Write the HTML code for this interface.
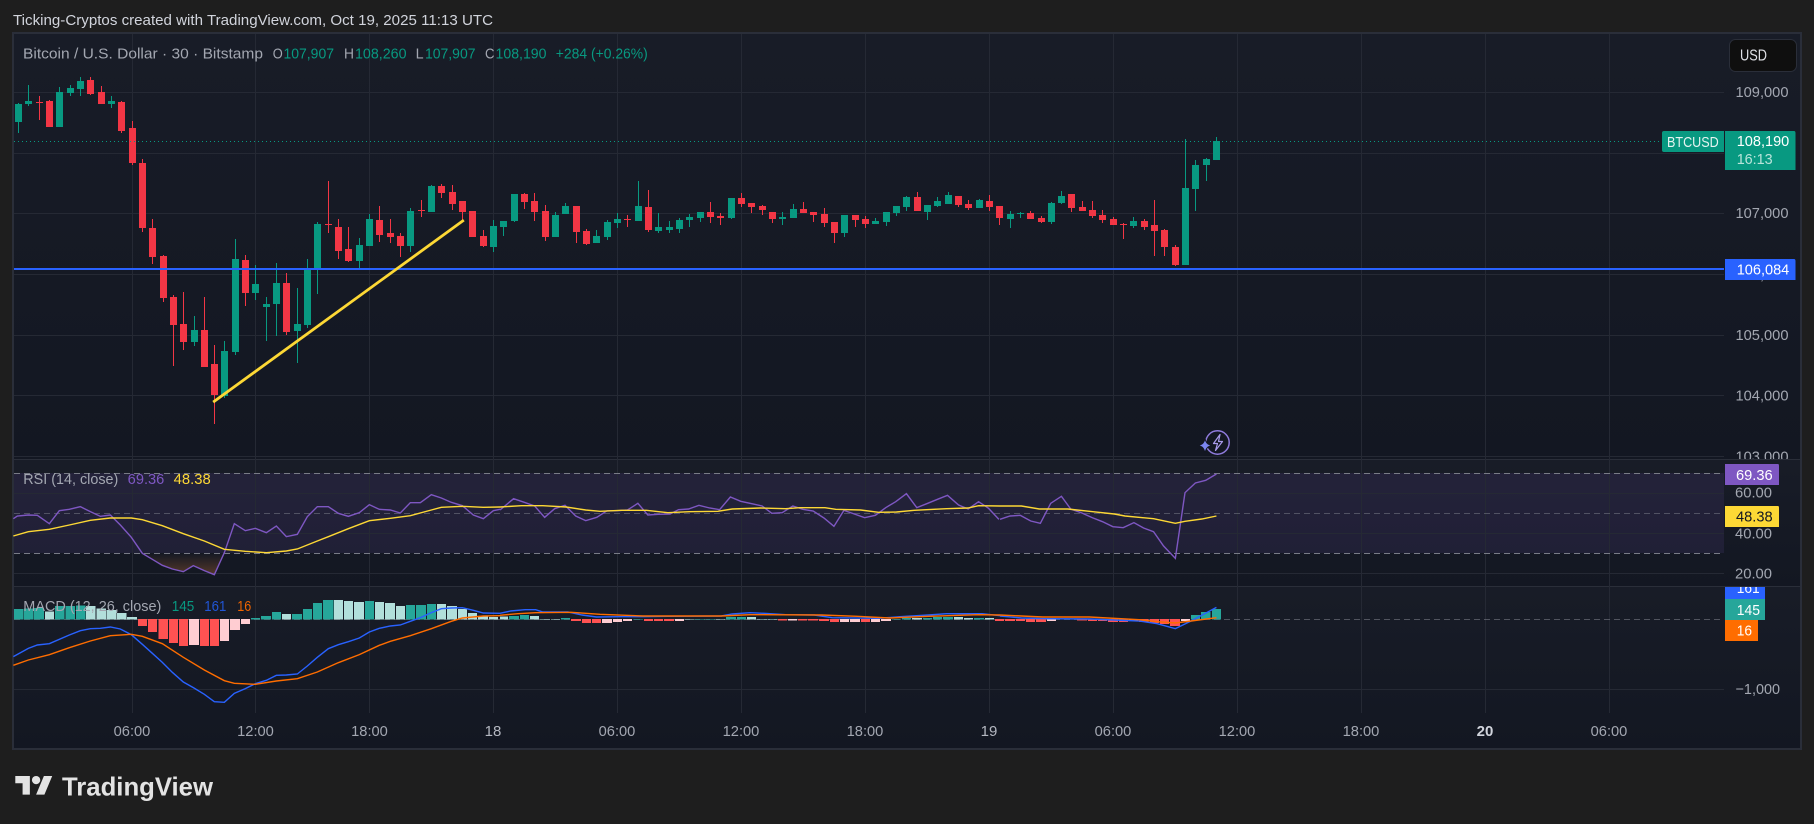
<!DOCTYPE html>
<html><head><meta charset="utf-8"><title>BTCUSD</title>
<style>
html,body{margin:0;padding:0;background:#1e1e1e;width:1814px;height:824px;overflow:hidden}
svg{display:block}
text{font-family:"Liberation Sans",sans-serif;font-size:14px}
.ax{fill:#a3a7b1;font-size:15px}
.t{fill:#a3a7b1;font-size:15px;text-anchor:middle}
.lg{fill:#a3a7b1;font-size:14.5px}
.v{fill:#089981;font-size:14.5px}
</style></head><body>
<svg width="1814" height="824" viewBox="0 0 1814 824" xmlns="http://www.w3.org/2000/svg">
<defs>
<linearGradient id="g1" x1="0" y1="0" x2="0" y2="1"><stop offset="0" stop-color="#181c27"/><stop offset="1" stop-color="#131722"/></linearGradient>
<linearGradient id="ov" gradientUnits="userSpaceOnUse" x1="0" y1="280" x2="0" y2="344"><stop offset="0" stop-color="#ff8c3c" stop-opacity="0"/><stop offset="1" stop-color="#ff8c3c" stop-opacity=".28"/></linearGradient>
<clipPath id="c161"><rect x="1725" y="587" width="45" height="13"/></clipPath>
</defs>
<rect width="1814" height="824" fill="#1e1e1e"/>
<text x="13" y="25" fill="#d1d4dc" style="font-size:14.5px" textLength="480" lengthAdjust="spacingAndGlyphs">Ticking-Cryptos created with TradingView.com, Oct 19, 2025 11:13 UTC</text>

<rect x="13" y="33" width="1788" height="716" fill="#131722" stroke="#2a2e39" stroke-width="2"/>
<rect x="14" y="34" width="1786" height="425" fill="url(#g1)"/>

<!-- price pane grid -->
<g shape-rendering="crispEdges" stroke="#252934" stroke-width="1" fill="none">
<path d="M14 92.5H1724M14 153.5H1724M14 213.5H1724M14 274.5H1724M14 335.5H1724M14 395.5H1724M14 456.5H1724"/>
</g>
<text class="ax" x="1735.5" y="97" textLength="53" lengthAdjust="spacingAndGlyphs">109,000</text>
<text class="ax" x="1735.5" y="218" textLength="53" lengthAdjust="spacingAndGlyphs">107,000</text>
<text class="ax" x="1735.5" y="279.6" textLength="53" lengthAdjust="spacingAndGlyphs">106,000</text>
<text class="ax" x="1735.5" y="340" textLength="53" lengthAdjust="spacingAndGlyphs">105,000</text>
<text class="ax" x="1735.5" y="400.5" textLength="53" lengthAdjust="spacingAndGlyphs">104,000</text>
<text class="ax" x="1735.5" y="461.7" textLength="53" lengthAdjust="spacingAndGlyphs">103,000</text>

<!-- lower panes -->
<rect x="14" y="460" width="1786" height="126" fill="url(#g1)"/>
<rect x="14" y="587" width="1786" height="161" fill="url(#g1)"/>

<g shape-rendering="crispEdges">
<rect x="14" y="473" width="1710" height="80" fill="#7e57c2" fill-opacity=".12"/>
<path d="M14 459.5H1801M14 586.5H1801" stroke="#2a2e39" fill="none"/>
<path d="M14 493.5H1724M14 533.5H1724M14 573.5H1724M14 689.5H1724" stroke="#252934" fill="none"/>
<path d="M132.5 34V713M255.5 34V713M369.5 34V713M493.5 34V713M617.5 34V713M741.5 34V713M865.5 34V713M989.5 34V713M1113.5 34V713M1237.5 34V713M1361.5 34V713M1485.5 34V713M1609.5 34V713" stroke="#252934" fill="none"/>
<path d="M14 473.5H1724M14 553.5H1724" stroke="#787b86" stroke-dasharray="6 4" fill="none"/>
<path d="M14 513.5H1724" stroke="#787b86" stroke-opacity=".55" stroke-dasharray="6 4" fill="none"/>
<path d="M14 619.5H1724" stroke="#787b86" stroke-opacity=".6" stroke-dasharray="6 4" fill="none"/>
</g>

<!-- candles -->
<g shape-rendering="crispEdges">
<path fill="none" stroke="#089981" d="M18.5 103V133M28.5 85V106M59.5 87V127M70.5 85V96M80.5 77V96M111.5 96V108M194.5 316V346M224.5 341V398M235.5 239V355M255.5 265V300M266.5 297V341M276.5 263V336M297.5 288V363M307.5 259V328M317.5 222V294M359.5 238V270M369.5 214V246M410.5 208V252M431.5 185V212M493.5 220V252M503.5 221V236M514.5 194V222M555.5 212V237M565.5 203V214M596.5 230V243M607.5 220V240M617.5 213V228M638.5 181V221M658.5 213V233M669.5 221V233M679.5 218V233M689.5 214V227M700.5 212V222M731.5 198V219M782.5 212V225M793.5 204V218M844.5 215V237M875.5 218V224M886.5 212V226M896.5 206V216M906.5 196V211M927.5 205V220M937.5 197V207M948.5 192V204M979.5 199V208M1010.5 211V228M1020.5 212V218M1051.5 202V224M1061.5 191V204M1133.5 217V228M1185.5 139V265M1195.5 160V211M1206.5 158V181M1216.5 137V160"/>
<path fill="#089981" d="M15 104h7v18h-7zM25 101h7v3h-7zM56 92h7v35h-7zM67 88h7v5h-7zM77 81h7v8h-7zM108 101h7v3h-7zM191 330h7v12h-7zM221 351h7v45h-7zM232 259h7v93h-7zM252 284h7v9h-7zM263 304h7v3h-7zM273 283h7v21h-7zM294 324h7v7h-7zM304 268h7v57h-7zM314 224h7v46h-7zM356 245h7v16h-7zM366 219h7v27h-7zM407 211h7v35h-7zM428 186h7v26h-7zM490 226h7v21h-7zM500 221h7v6h-7zM511 194h7v27h-7zM552 215h7v22h-7zM562 206h7v8h-7zM593 236h7v7h-7zM604 222h7v15h-7zM614 219h7v4h-7zM635 206h7v15h-7zM655 227h7v4h-7zM666 227h7v3h-7zM676 220h7v9h-7zM686 217h7v3h-7zM697 212h7v6h-7zM728 198h7v20h-7zM779 217h7v2h-7zM790 209h7v9h-7zM841 215h7v18h-7zM872 221h7v3h-7zM883 212h7v10h-7zM893 206h7v7h-7zM903 197h7v10h-7zM924 205h7v7h-7zM934 201h7v5h-7zM945 195h7v9h-7zM976 200h7v8h-7zM1007 214h7v5h-7zM1017 213h7v1h-7zM1048 203h7v19h-7zM1058 196h7v7h-7zM1130 221h7v5h-7zM1182 188h7v77h-7zM1192 165h7v24h-7zM1203 159h7v6h-7zM1213 141h7v19h-7z"/>
<path fill="none" stroke="#f23645" d="M39.5 96V120M49.5 100V127M90.5 77V95M101.5 86V104M121.5 101V133M132.5 121V165M142.5 159V232M152.5 219V264M163.5 255V302M173.5 295V366M183.5 292V350M204.5 297V367M214.5 345V424M245.5 255V306M286.5 273V335M328.5 181V233M338.5 219V259M348.5 227V262M379.5 206V242M390.5 219V243M400.5 233V257M421.5 200V217M441.5 184V198M452.5 185V210M462.5 201V221M472.5 211V237M483.5 230V247M524.5 193V209M534.5 193V221M545.5 205V241M576.5 206V243M586.5 229V245M627.5 215V227M648.5 190V232M710.5 202V223M720.5 213V225M741.5 193V207M751.5 203V213M762.5 205V215M772.5 212V223M803.5 202V213M813.5 212V222M824.5 208V227M834.5 222V243M855.5 215V227M865.5 216V228M917.5 192V211M958.5 196V207M968.5 200V210M989.5 195V211M999.5 206V225M1030.5 211V219M1041.5 216V223M1071.5 194V212M1082.5 201V211M1092.5 201V218M1102.5 210V223M1113.5 217V225M1123.5 223V239M1144.5 219V230M1154.5 200V256M1164.5 229V256M1175.5 245V266"/>
<path fill="#f23645" d="M36 102h7v1h-7zM46 101h7v26h-7zM87 80h7v14h-7zM98 92h7v12h-7zM118 102h7v29h-7zM129 128h7v35h-7zM139 163h7v65h-7zM149 228h7v29h-7zM160 256h7v42h-7zM170 297h7v28h-7zM180 324h7v18h-7zM201 330h7v37h-7zM211 364h7v31h-7zM242 260h7v33h-7zM283 283h7v49h-7zM325 224h7v1h-7zM335 227h7v24h-7zM345 249h7v12h-7zM376 220h7v15h-7zM387 233h7v4h-7zM397 236h7v10h-7zM418 210h7v1h-7zM438 186h7v7h-7zM449 192h7v12h-7zM459 201h7v11h-7zM469 211h7v26h-7zM480 236h7v10h-7zM521 194h7v8h-7zM531 201h7v11h-7zM542 211h7v26h-7zM573 206h7v26h-7zM583 231h7v13h-7zM624 219h7v1h-7zM645 207h7v23h-7zM707 212h7v5h-7zM717 216h7v2h-7zM738 198h7v6h-7zM748 203h7v4h-7zM759 206h7v4h-7zM769 212h7v7h-7zM800 209h7v4h-7zM810 212h7v3h-7zM821 214h7v9h-7zM831 222h7v11h-7zM852 215h7v5h-7zM862 219h7v5h-7zM914 197h7v14h-7zM955 196h7v9h-7zM965 204h7v4h-7zM986 201h7v6h-7zM996 206h7v12h-7zM1027 213h7v6h-7zM1038 218h7v4h-7zM1068 194h7v14h-7zM1079 207h7v4h-7zM1089 210h7v6h-7zM1099 215h7v5h-7zM1110 219h7v6h-7zM1120 224h7v1h-7zM1141 221h7v6h-7zM1151 225h7v6h-7zM1161 230h7v17h-7zM1172 247h7v18h-7z"/>
<path d="M14 141.5H1662" stroke="#089981" stroke-dasharray="1 3" fill="none"/>
<rect x="14" y="268" width="1710" height="2" fill="#2962ff"/>
</g>
<path d="M214.3 401.3L462.7 221" stroke="#fdd835" stroke-width="2.8" fill="none" stroke-linecap="square"/>

<!-- lightning icon -->
<g fill="none">
<circle cx="1217.5" cy="442.5" r="11.7" stroke="#8f7bdc" stroke-width="1.5"/>
<path d="M1220 434.5l-6.5 9h4l-2 7 7-9h-4z" stroke="#a99bea" stroke-width="1.2" stroke-linejoin="round"/>
<path d="M1205 438.5c1 4.4 2.6 6 7 7-4.4 1-6 2.6-7 7.5-1-4.9-2.6-6.5-7-7.5 4.4-1 6-2.6 7-7z" fill="#7b86f0" stroke="#131722" stroke-width="1"/>
</g>

<!-- RSI -->
<g transform="translate(0,460) scale(.33333)">
<polygon points="427,280 457,298 487,316 517,327 550,335 580,317 613,332 643,344 673,280" fill="url(#ov)"/>
<polyline fill="none" stroke="#7e57c2" stroke-width="1.4" vector-effect="non-scaling-stroke" points="40,176 52,168 85,165 112,166 148,191 178,152 208,148 241,140 271,155 301,169 331,165 361,195 394,232 427,280 457,298 487,316 517,327 550,335 580,317 613,332 643,344 673,278 703,191 736,212 766,205 799,218 829,198 859,230 892,223 922,170 952,140 985,140 1015,160 1045,169 1078,158 1108,134 1138,148 1171,150 1201,159 1231,128 1261,128 1294,104 1324,114 1354,127 1387,137 1420,165 1450,176 1480,152 1500,148"/>
<polyline fill="none" stroke="#fdd835" stroke-width="1.4" vector-effect="non-scaling-stroke" points="40,228 85,215 148,208 208,195 271,181 331,174 394,174 427,179 487,197 550,221 613,243 673,268 736,274 799,278 859,273 892,267 952,243 985,230 1045,206 1108,182 1171,175 1231,167 1294,150 1324,142 1387,139 1450,142 1500,141"/>
</g>
<g transform="translate(500,460) scale(.35714,.33333)">
<polyline fill="none" stroke="#7e57c2" stroke-width="1.4" vector-effect="non-scaling-stroke" points="0,150 38,116 68,127 97,138 125,172 153,146 182,136 212,168 240,182 271,172 300,152 328,152 357,150 386,130 414,165 443,163 476,162 500,149 528,147 557,136 587,144 615,149 645,111 674,124 705,131 734,138 761,160 790,158 820,138 848,148 877,153 907,174 935,199 963,151 992,162 1021,173 1051,166 1080,143 1108,125 1138,101 1167,143 1195,131 1225,118 1253,106 1284,135 1311,147 1340,125 1368,145 1397,178"/>
<polyline fill="none" stroke="#fdd835" stroke-width="1.4" vector-effect="non-scaling-stroke" points="0,141 60,137 120,137 185,141 240,150 280,154 340,151 410,151 470,158 530,155 610,154 650,147 730,144 800,146 840,143 910,143 940,148 1010,150 1060,157 1110,156 1160,151 1250,146 1310,144 1340,137 1400,138"/>
</g>
<g transform="translate(1000,460) scale(.35714,.33333)">
<polyline fill="none" stroke="#7e57c2" stroke-width="1.4" vector-effect="non-scaling-stroke" points="0,178 28,168 57,166 86,183 113,190 142,130 172,109 198,147 227,158 258,173 287,185 316,200 345,203 375,188 402,204 430,215 458,258 491,295 518,98 547,69 576,61 606,42"/>
<polyline fill="none" stroke="#fdd835" stroke-width="1.4" vector-effect="non-scaling-stroke" points="0,138 60,138 110,147 190,147 260,155 320,162 350,168 430,176 491,190 518,184 565,177 606,168"/>
</g>

<!-- MACD histogram -->
<g transform="translate(0,460) scale(.33333)">
<path shape-rendering="crispEdges" fill="#26a69a" d="M42 447H70V479H42zM72 446H100V479H72zM102 444H132V479H102zM165 438H194V479H165zM197 438H225V479H197zM228 437H256V479H228zM753 474H780V479H753zM783 468H813V479H783zM816 456H843V479H816zM876 462H906V479H876zM909 447H936V479H909zM939 429H966V479H939zM969 420H1000V479H969zM1095 423H1122V479H1095zM1218 435H1245V479H1218zM1248 435H1278V479H1248zM1281 432H1308V479H1281z"/>
<path shape-rendering="crispEdges" fill="#b2dfdb" d="M135 455H162V479H135zM258 438H287V479H258zM289 445H318V479H289zM320 450H349V479H320zM351 459H379V479H351zM381 471H411V479H381zM846 462H873V479H846zM1002 420H1029V479H1002zM1032 423H1059V479H1032zM1062 426H1092V479H1062zM1125 426H1152V479H1125zM1155 429H1185V479H1155zM1188 438H1215V479H1188zM1311 432H1338V479H1311zM1341 438H1371V479H1341zM1374 447H1401V479H1374zM1404 459H1431V479H1404zM1434 468H1464V479H1434zM1467 471H1494V479H1467z"/>
<path shape-rendering="crispEdges" fill="#ff5252" d="M414 477H441V498H414zM444 477H471V516H444zM475 477H504V537H475zM507 477H534V549H507zM537 477H564V558H537zM600 477H627V558H600zM630 477H657V558H630z"/>
<path shape-rendering="crispEdges" fill="#ffcdd2" d="M567 477H597V555H567zM660 477H687V543H660zM690 477H720V510H690zM723 477H750V492H723z"/>
<polyline fill="none" stroke="#2962ff" stroke-width="1.4" vector-effect="non-scaling-stroke" points="40,590 85,565 112,555 148,551 208,525 241,512 271,506 301,505 331,501 361,507 394,524 427,553 457,580 487,607 517,637 550,666 580,683 613,703 643,725 673,727 703,700 736,686 766,671 799,661 829,646 859,645 892,642 922,618 952,592 985,566 1015,554 1045,545 1078,534 1108,516 1138,505 1171,498 1201,495 1231,484 1261,473 1294,458 1324,446 1354,444 1387,443 1420,451 1450,459 1500,460"/>
<polyline fill="none" stroke="#ff6d00" stroke-width="1.4" vector-effect="non-scaling-stroke" points="40,616 85,600 148,584 208,563 271,543 331,527 394,523 427,529 487,551 550,592 613,630 673,662 703,670 766,673 829,663 892,656 952,636 1015,608 1078,584 1138,556 1171,544 1231,527 1294,506 1354,484 1387,474 1450,468 1500,467"/>
</g>
<g transform="translate(500,460) scale(.35714,.33333)">
<path shape-rendering="crispEdges" fill="#26a69a" d="M25 468H53V479H25zM56 465H81V479H56zM171 474H196V479H171zM372 477H400V479H372zM546 477H574V479H546zM577 477H602V479H577zM633 471H661V479H633zM664 471H689V479H664zM1097 477H1123V479H1097zM1126 474H1151V479H1126zM1184 474H1210V479H1184zM1212 471H1238V479H1212zM1240 471H1268V479H1240zM1327 474H1355V479H1327z"/>
<path shape-rendering="crispEdges" fill="#b2dfdb" d="M0 470H22V479H0zM84 468H109V479H84zM112 477H140V479H112zM143 477H168V479H143zM518 477H543V479H518zM605 477H630V479H605zM692 471H717V479H692zM720 477H748V479H720zM750 477H776V479H750zM1154 474H1182V479H1154zM1271 471H1296V479H1271zM1299 474H1324V479H1299zM1358 474H1383V479H1358z"/>
<path shape-rendering="crispEdges" fill="#ff5252" d="M199 477H227V483H199zM230 477H255V489H230zM258 477H283V489H258zM403 477H428V483H403zM431 477H456V483H431zM459 477H487V483H459zM778 477H804V481H778zM835 477H860V481H835zM863 477H891V481H863zM893 477H921V483H893zM924 477H949V486H924zM1011 477H1036V486H1011zM1386 477H1411V483H1386z"/>
<path shape-rendering="crispEdges" fill="#ffcdd2" d="M286 477H314V489H286zM316 477H342V486H316zM344 477H370V483H344zM490 477H515V483H490zM806 477H832V481H806zM952 477H977V486H952zM980 477H1008V486H980zM1039 477H1064V486H1039zM1067 477H1095V483H1067z"/>
<polyline fill="none" stroke="#2962ff" stroke-width="1.4" vector-effect="non-scaling-stroke" points="0,460 30,453 70,449 100,449 120,456 190,456 230,465 270,471 340,470 400,470 470,469 620,468 650,462 700,458 740,460 800,464 880,465 930,473 1060,475 1120,470 1200,465 1250,461 1350,461 1400,467"/>
<polyline fill="none" stroke="#ff6d00" stroke-width="1.4" vector-effect="non-scaling-stroke" points="0,466 50,461 100,458 200,457 280,463 400,468 620,468 700,464 900,465 1000,469 1090,474 1200,469 1340,464 1400,465"/>
</g>
<g transform="translate(1000,460) scale(.35714,.33333)">
<path shape-rendering="crispEdges" fill="#26a69a" d="M160 477H185V479H160zM535 465H560V479H535zM563 456H590V479H563zM593 447H619V479H593z"/>
<path shape-rendering="crispEdges" fill="#b2dfdb" d="M188 477H213V479H188z"/>
<path shape-rendering="crispEdges" fill="#ff5252" d="M14 477H42V483H14zM45 477H70V483H45zM73 477H98V486H73zM101 477H129V486H101zM216 477H244V481H216zM247 477H272V483H247zM275 477H300V483H275zM302 477H330V486H302zM333 477H358V486H333zM389 477H416V486H389zM420 477H445V489H420zM448 477H473V492H448zM476 477H504V498H476z"/>
<path shape-rendering="crispEdges" fill="#ffcdd2" d="M132 477H157V483H132zM361 477H386V483H361zM507 477H532V483H507z"/>
<polyline fill="none" stroke="#2962ff" stroke-width="1.4" vector-effect="non-scaling-stroke" points="0,468 60,474 130,476 250,477 390,483 440,491 491,506 535,483 606,442"/>
<polyline fill="none" stroke="#ff6d00" stroke-width="1.4" vector-effect="non-scaling-stroke" points="0,465 120,471 250,471 390,479 440,485 491,489 535,483 606,473"/>
</g>

<!-- legends -->
<text class="lg" x="23" y="58.5" textLength="240" lengthAdjust="spacingAndGlyphs">Bitcoin / U.S. Dollar · 30 · Bitstamp</text>
<text class="lg" x="272.8" y="58.5" textLength="10" lengthAdjust="spacingAndGlyphs">O</text>
<text class="v" x="283.5" y="58.5" textLength="50.5" lengthAdjust="spacingAndGlyphs">107,907</text>
<text class="lg" x="344" y="58.5" textLength="10" lengthAdjust="spacingAndGlyphs">H</text>
<text class="v" x="355" y="58.5" textLength="51.5" lengthAdjust="spacingAndGlyphs">108,260</text>
<text class="lg" x="415.6" y="58.5" textLength="8" lengthAdjust="spacingAndGlyphs">L</text>
<text class="v" x="425" y="58.5" textLength="50.5" lengthAdjust="spacingAndGlyphs">107,907</text>
<text class="lg" x="485" y="58.5" textLength="9.5" lengthAdjust="spacingAndGlyphs">C</text>
<text class="v" x="495.5" y="58.5" textLength="51" lengthAdjust="spacingAndGlyphs">108,190</text>
<text class="v" x="555.8" y="58.5" textLength="92" lengthAdjust="spacingAndGlyphs">+284 (+0.26%)</text>

<text class="lg" x="23.3" y="484" textLength="95" lengthAdjust="spacingAndGlyphs">RSI (14, close)</text>
<text x="127.7" y="484" fill="#7e57c2" style="font-size:14.5px" textLength="36.6" lengthAdjust="spacingAndGlyphs">69.36</text>
<text x="173.7" y="484" fill="#fdd835" style="font-size:14.5px" textLength="37" lengthAdjust="spacingAndGlyphs">48.38</text>

<text class="lg" x="23.3" y="611" textLength="138" lengthAdjust="spacingAndGlyphs">MACD (12, 26, close)</text>
<text x="171.7" y="611" fill="#089981" style="font-size:14.5px" textLength="22.6" lengthAdjust="spacingAndGlyphs">145</text>
<text x="204.3" y="611" fill="#2156d6" style="font-size:14.5px" textLength="22" lengthAdjust="spacingAndGlyphs">161</text>
<text x="237.3" y="611" fill="#ef6500" style="font-size:14.5px" textLength="14" lengthAdjust="spacingAndGlyphs">16</text>

<!-- USD button -->
<rect x="1729.5" y="39.5" width="67" height="32" rx="6" fill="#0f0f0f" stroke="#2a2e39"/>
<text x="1740" y="60.5" fill="#dfe1e6" style="font-size:15.5px" textLength="27" lengthAdjust="spacingAndGlyphs">USD</text>

<!-- price labels -->
<path d="M1664 131H1724V152H1664Q1662 152 1662 150V133Q1662 131 1664 131z" fill="#089981"/>
<text x="1667" y="147" fill="#e6f4f1" style="font-size:15px" textLength="51.7" lengthAdjust="spacingAndGlyphs">BTCUSD</text>
<path d="M1725 131H1794Q1795.5 131 1795.5 133V170H1725z" fill="#089981"/>
<text x="1736.7" y="146" fill="#fff" style="font-size:15px" textLength="52.6" lengthAdjust="spacingAndGlyphs">108,190</text>
<text x="1736.7" y="164" fill="#b8e4da" style="font-size:15px" textLength="36" lengthAdjust="spacingAndGlyphs">16:13</text>
<path d="M1725 259H1794Q1795.5 259 1795.5 261V280H1725z" fill="#2962ff"/>
<text x="1736.7" y="274.5" fill="#fff" style="font-size:15px" textLength="52.6" lengthAdjust="spacingAndGlyphs">106,084</text>

<path d="M1725 464H1778Q1779 464 1779 466V485H1725z" fill="#7e57c2"/>
<text x="1736" y="480" fill="#fff" style="font-size:15px" textLength="36.7" lengthAdjust="spacingAndGlyphs">69.36</text>
<text class="ax" x="1735" y="497.7" textLength="37" lengthAdjust="spacingAndGlyphs">60.00</text>
<path d="M1725 506H1778Q1779 506 1779 508V527H1725z" fill="#fdd835"/>
<text x="1736" y="521.7" fill="#131722" style="font-size:15px" textLength="36.7" lengthAdjust="spacingAndGlyphs">48.38</text>
<text class="ax" x="1735" y="538.7" textLength="37" lengthAdjust="spacingAndGlyphs">40.00</text>
<text class="ax" x="1735" y="578.7" textLength="37" lengthAdjust="spacingAndGlyphs">20.00</text>

<g clip-path="url(#c161)">
<rect x="1725" y="578" width="40" height="21" fill="#2962ff"/>
<text x="1736.7" y="593" fill="#fff" style="font-size:15px" textLength="23" lengthAdjust="spacingAndGlyphs">161</text>
</g>
<rect x="1725" y="599" width="40" height="21" fill="#26a69a"/>
<text x="1736.7" y="615" fill="#fff" style="font-size:15px" textLength="23.3" lengthAdjust="spacingAndGlyphs">145</text>
<rect x="1725" y="620" width="33" height="21" fill="#ff6d00"/>
<text x="1736.7" y="635.7" fill="#fff" style="font-size:15px" textLength="15.3" lengthAdjust="spacingAndGlyphs">16</text>
<text class="ax" x="1735.5" y="694" textLength="44.5" lengthAdjust="spacingAndGlyphs">−1,000</text>

<!-- time axis -->
<text class="t" x="132" y="736" textLength="36.7" lengthAdjust="spacingAndGlyphs">06:00</text>
<text class="t" x="255.5" y="736" textLength="36.7" lengthAdjust="spacingAndGlyphs">12:00</text>
<text class="t" x="369.5" y="736" textLength="36.7" lengthAdjust="spacingAndGlyphs">18:00</text>
<text class="t" x="493" y="736" style="fill:#b4b7c0">18</text>
<text class="t" x="617" y="736" textLength="36.7" lengthAdjust="spacingAndGlyphs">06:00</text>
<text class="t" x="741" y="736" textLength="36.7" lengthAdjust="spacingAndGlyphs">12:00</text>
<text class="t" x="865" y="736" textLength="36.7" lengthAdjust="spacingAndGlyphs">18:00</text>
<text class="t" x="989" y="736" style="fill:#b4b7c0">19</text>
<text class="t" x="1113" y="736" textLength="36.7" lengthAdjust="spacingAndGlyphs">06:00</text>
<text class="t" x="1237" y="736" textLength="36.7" lengthAdjust="spacingAndGlyphs">12:00</text>
<text class="t" x="1361" y="736" textLength="36.7" lengthAdjust="spacingAndGlyphs">18:00</text>
<text class="t" x="1485" y="736" style="fill:#d1d4dc;font-weight:700">20</text>
<text class="t" x="1609" y="736" textLength="36.7" lengthAdjust="spacingAndGlyphs">06:00</text>

<!-- logo -->
<g transform="translate(15.3,771.8) scale(1.04)" fill="#e3e3e3">
<path d="M14 22H7V11H0V4h14v18zM28 22h-8l7.5-18h8L28 22z"/>
<circle cx="20" cy="8" r="4"/>
</g>
<text x="62" y="795.3" fill="#e3e3e3" style="font-size:26px;font-weight:700" textLength="151" lengthAdjust="spacingAndGlyphs">TradingView</text>
</svg>
</body></html>
